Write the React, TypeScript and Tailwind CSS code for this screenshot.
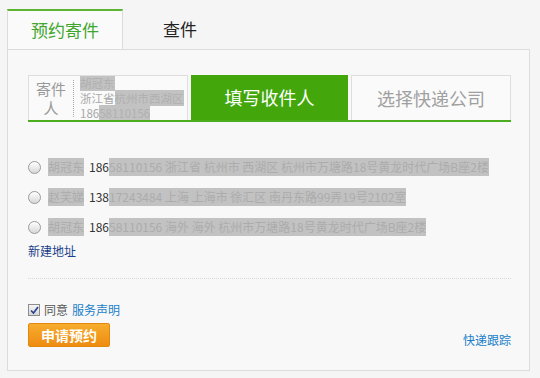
import React from 'react';

const font = { fontFamily: '"Noto Sans CJK SC", "Noto Sans", sans-serif' };

const Blur = ({ children }: { children: React.ReactNode }) => (
  <span className="bg-[#c2c2c2] text-[#acacac] leading-[18px] inline-block">{children}</span>
);

const addresses = [
  { name: '胡冠东', head: '186', rest: '58110156 浙江省 杭州市 西湖区 杭州市万塘路18号黄龙时代广场B座2楼' },
  { name: '赵芙娣', head: '138', rest: '17243484 上海 上海市 徐汇区 南丹东路99弄19号2102室' },
  { name: '胡冠东', head: '186', rest: '58110156 海外 海外 杭州市万塘路18号黄龙时代广场B座2楼' },
];

const Radio = () => (
  <span className="w-[13px] h-[13px] rounded-full border border-[#9a9a9a] bg-gradient-to-b from-[#ffffff] to-[#d8d8d8] shrink-0" />
);

export default function App() {
  return (
    <div className="w-[540px] h-[378px] bg-[#f5f5f5] pl-[7px] pt-[9px] text-[12px] text-[#333]" style={font}>
      {/* tabs */}
      <div className="flex relative z-10">
        <div className="w-[116px] h-[40px] border-t-2 border-l border-r border-t-[#5cb531] border-l-[#dcdcdc] border-r-[#dcdcdc] bg-[#fafafa] flex items-center justify-center text-[17px] text-[#3fa62e] -mb-px">
          预约寄件
        </div>
        <div className="w-[114px] h-[40px] flex items-center justify-center text-[17px] text-[#222]">查件</div>
      </div>

      {/* panel */}
      <div className="w-[523px] h-[322px] border border-[#dcdcdc] bg-[#f8f8f8] pl-[20px] pr-[18px] pt-[25px] flex flex-col">
        {/* steps */}
        <div className="flex gap-[3px] border-b-2 border-[#4cad1f] w-[483px]">
          <div className="w-[160px] h-[45px] border border-b-0 border-[#dedede] bg-[#fafafa] flex items-center overflow-hidden">
            <div className="w-[44px] shrink-0 flex flex-col items-center text-[15px] leading-[19px] text-[#999]">
              <span>寄件</span>
              <span>人</span>
            </div>
            <div className="h-[37px] shrink-0 border-l border-dotted border-[#aaa]" />
            <div className="pl-[6px] text-[11.5px] leading-[15px] text-[#a8a8a8] flex flex-col items-start whitespace-nowrap">
              <span className="bg-[#c2c2c2] text-[#b0b0b0]">胡冠东</span>
              <span>浙江省<span className="bg-[#c2c2c2] text-[#b0b0b0]">杭州市西湖区</span></span>
              <span>186<span className="bg-[#c2c2c2] text-[#b0b0b0]">58110156</span></span>
            </div>
          </div>
          <div className="w-[157px] h-[45px] bg-[#43a70c] flex items-center justify-center text-[18px] text-white">
            填写收件人
          </div>
          <div className="w-[160px] h-[45px] border border-b-0 border-[#dedede] bg-[#fafafa] flex items-center justify-center text-[18px] text-[#a0a0a0]">
            选择快递公司
          </div>
        </div>

        {/* address list */}
        <div className="mt-[30px] flex flex-col">
          {addresses.map((a, i) => (
            <div key={i} className="h-[30px] flex items-center gap-[7px]">
              <Radio />
              <div className="flex items-center whitespace-nowrap">
                <Blur>{a.name}</Blur>
                <span className="px-[5px] text-[#333]">{a.head}</span>
                <span className="-ml-[5px]"><Blur>{a.rest}</Blur></span>
              </div>
            </div>
          ))}
          <div className="h-[18px] leading-[18px] text-[#1b3f8b]">新建地址</div>
        </div>

        <div className="mt-[18px] w-[483px] border-t border-dotted border-[#d8d8d8]" />

        {/* agree + buttons */}
        <div className="mt-[24px] flex items-center gap-[4px] h-[14px]">
          <span className="w-[12px] h-[12px] border border-[#8c8c8c] bg-gradient-to-b from-[#f4f4f4] to-[#d6d6d6] flex items-center justify-center">
            <svg width="9" height="9" viewBox="0 0 9 9">
              <path d="M1 4.5 L3.5 7 L8 1" stroke="#25408f" strokeWidth="1.6" fill="none" />
            </svg>
          </span>
          <span className="text-[#555]">同意</span>
          <span className="text-[#1a7fc8]">服务声明</span>
        </div>
        <div className="flex items-end justify-between w-[483px] mt-[6px]">
          <div className="w-[82px] h-[24px] rounded-[2px] border border-[#e2880f] bg-gradient-to-b from-[#f6ac2c] to-[#ee8c10] flex items-center justify-center text-white text-[14px] font-bold">
            申请预约
          </div>
          <span className="text-[#1a7fc8] leading-[14px]">快递跟踪</span>
        </div>
      </div>
    </div>
  );
}
